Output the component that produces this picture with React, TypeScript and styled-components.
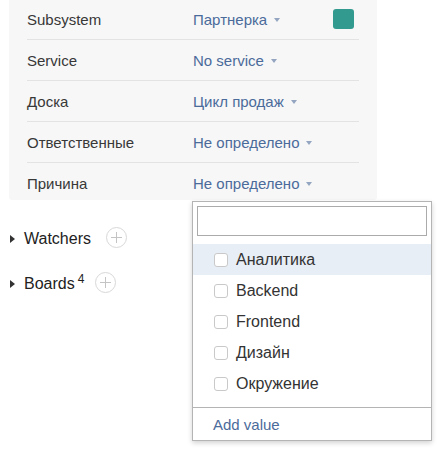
import React from "react";
import styled, { createGlobalStyle } from "styled-components";

const Global = createGlobalStyle`
  html, body { margin: 0; padding: 0; background: #fff; }
  body { font-family: "Liberation Sans", Arial, sans-serif; color: #333; }
`;

const Page = styled.div`
  position: relative;
  width: 445px;
  height: 450px;
  overflow: hidden;
`;

const Panel = styled.div`
  margin: -1px 0 0 9px;
  width: 368px;
  box-sizing: border-box;
  padding: 0 18px 0 18px;
  background: #f7f7f7;
  border-radius: 0 0 3px 3px;
  height: 201px;
`;

const Row = styled.div`
  display: flex;
  align-items: center;
  height: 40px;
  border-top: 1px solid #e3e3e3;
  &:first-child { border-top: none; }
`;

const Label = styled.div`
  width: 166px;
  font-size: 15px;
  color: #383838;
`;

const Value = styled.div`
  flex: 1;
  display: flex;
  align-items: center;
  font-size: 15px;
  color: #4b6b9b;
`;

const Caret = styled.span`
  display: inline-block;
  margin-left: 7px;
  margin-top: 2px;
  border-left: 3.5px solid transparent;
  border-right: 3.5px solid transparent;
  border-top: 4px solid #93a5c0;
`;

const Swatch = styled.div<{ $color: string }>`
  width: 21px;
  height: 20px;
  border-radius: 3px;
  background: ${(p) => p.$color};
  margin-right: 5px;
`;

const Sections = styled.div`
  padding: 28px 0 0 10px;
  display: flex;
  flex-direction: column;
  gap: 23px;
`;

const Section = styled.div`
  display: flex;
  align-items: center;
  height: 22px;
`;

const Arrow = styled.span`
  display: inline-block;
  border-top: 4px solid transparent;
  border-bottom: 4px solid transparent;
  border-left: 5px solid #333;
  margin-right: 9px;
`;

const SectionTitle = styled.span`
  font-size: 16px;
  color: #222;
`;

const Sup = styled.sup`
  font-size: 12px;
  vertical-align: 0;
  position: relative;
  top: -6px;
  margin-left: 3px;
`;

const PlusCircle = styled.span<{ $gap: number }>`
  display: inline-flex;
  align-items: center;
  justify-content: center;
  width: 19px;
  height: 19px;
  border: 1px solid #d8d8d8;
  border-radius: 50%;
  margin-left: ${(p) => p.$gap}px;
  margin-top: -3px;
  color: #c2c2c2;
`;

const Dropdown = styled.div`
  position: absolute;
  top: 201px;
  left: 192px;
  width: 240px;
  box-sizing: border-box;
  border: 1px solid #b4b4b4;
  background: #fff;
  box-shadow: 0 2px 5px rgba(0, 0, 0, 0.18);
`;

const SearchWrap = styled.div`
  padding: 4px 4px 0 4px;
`;

const Search = styled.div`
  height: 30px;
  box-sizing: border-box;
  border: 1px solid #ababab;
`;

const List = styled.div`
  padding: 8px 0 8px;
`;

const Item = styled.div<{ $active?: boolean }>`
  display: flex;
  align-items: center;
  height: 31px;
  padding-left: 21px;
  background: ${(p) => (p.$active ? "#e8eef5" : "transparent")};
  font-size: 16px;
  color: #333;
`;

const Box = styled.span`
  width: 14px;
  height: 14px;
  box-sizing: border-box;
  border: 1px solid #c9c9c9;
  border-radius: 3px;
  background: #fff;
  margin-right: 8px;
`;

const Footer = styled.div`
  border-top: 1px solid #b4b4b4;
  height: 32px;
  display: flex;
  align-items: center;
  padding-left: 20px;
  font-size: 15px;
  color: #4b6b9b;
`;

const fields: { label: string; value: string; swatch?: string }[] = [
  { label: "Subsystem", value: "Партнерка", swatch: "#339a8f" },
  { label: "Service", value: "No service" },
  { label: "Доска", value: "Цикл продаж" },
  { label: "Ответственные", value: "Не определено" },
  { label: "Причина", value: "Не определено" },
];

const options = ["Аналитика", "Backend", "Frontend", "Дизайн", "Окружение"];

const Plus = () => (
  <svg width="11" height="11" viewBox="0 0 11 11">
    <path d="M5.5 0v11M0 5.5h11" stroke="#c4c4c4" strokeWidth="1" />
  </svg>
);

export default function App() {
  return (
    <Page>
      <Global />
      <Panel>
        {fields.map((f) => (
          <Row key={f.label}>
            <Label>{f.label}</Label>
            <Value>
              {f.value}
              <Caret />
            </Value>
            {f.swatch && <Swatch $color={f.swatch} />}
          </Row>
        ))}
      </Panel>
      <Sections>
        <Section>
          <Arrow />
          <SectionTitle>Watchers</SectionTitle>
          <PlusCircle $gap={15}>
            <Plus />
          </PlusCircle>
        </Section>
        <Section>
          <Arrow />
          <SectionTitle>
            Boards<Sup>4</Sup>
          </SectionTitle>
          <PlusCircle $gap={11}>
            <Plus />
          </PlusCircle>
        </Section>
      </Sections>
      <Dropdown>
        <SearchWrap>
          <Search />
        </SearchWrap>
        <List>
          {options.map((o, i) => (
            <Item key={o} $active={i === 0}>
              <Box />
              {o}
            </Item>
          ))}
        </List>
        <Footer>Add value</Footer>
      </Dropdown>
    </Page>
  );
}
